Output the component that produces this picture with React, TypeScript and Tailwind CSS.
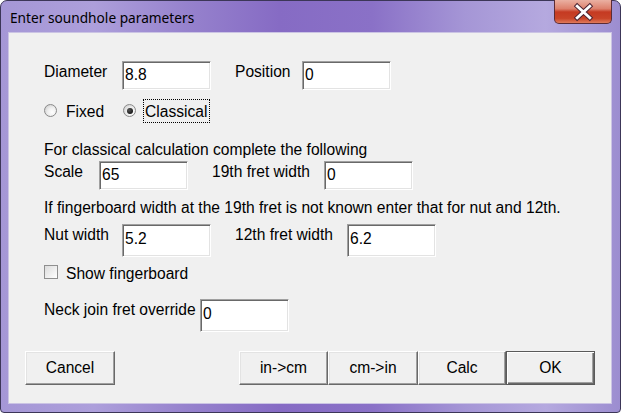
import React from 'react';

const Field = ({ value, tall }: { value: string; tall?: boolean }) => (
  <div
    className={`${tall ? 'h-[33px] pt-[5px]' : 'h-[29px] pt-[4px]'} w-[89px] shrink-0 bg-white pl-[2px] border border-t-[#a0a0a0] border-l-[#a0a0a0] border-b-white border-r-white shadow-[inset_1px_1px_0_#696969,inset_-1px_-1px_0_#e3e3e3]`}
  >
    {value}
  </div>
);

const Radio = ({ checked }: { checked?: boolean }) => (
  <div className="mt-[1px] w-[13px] h-[13px] shrink-0 rounded-full border border-[#8a8a8a] bg-[radial-gradient(circle_at_65%_65%,#ffffff_0%,#eeeeee_45%,#c4c4c4_100%)] flex items-center justify-center">
    {checked && <div className="w-[6px] h-[6px] rounded-full bg-[radial-gradient(circle_at_35%_35%,#555555,#000000)]" />}
  </div>
);

const Btn = ({ label, w, def }: { label: string; w: string; def?: boolean }) => (
  <div
    className={`${w} h-[34px] flex items-center justify-center bg-[#f0f0f0] ${
      def
        ? 'border border-[#5a5a5a] shadow-[inset_1px_1px_0_#ffffff,inset_-1px_-1px_0_#696969,inset_-2px_-2px_0_#a0a0a0]'
        : 'border border-t-white border-l-white border-r-[#696969] border-b-[#696969] shadow-[inset_-1px_-1px_0_#a0a0a0,inset_1px_1px_0_#e3e3e3]'
    }`}
  >
    {label}
  </div>
);

export default function App() {
  return (
    <div className="w-[621px] h-[413px] flex flex-col border border-[#3c3658] rounded-t-[7px] rounded-b-[4px] pl-[7px] pr-[8px] pb-[8px] bg-[linear-gradient(90deg,#a597d6_0%,#ad9fdb_15%,#9682cd_30%,#866bc4_45%,#8a71c7_60%,#a596d6_75%,#b5a9df_88%,#9c8dd0_100%)]">
      {/* title bar */}
      <div className="h-[31px] flex items-start shrink-0">
        <div className="pt-[7px] pl-[2px] text-[13.7px] leading-[20px] text-black font-['Noto_Sans',sans-serif]">
          Enter soundhole parameters
        </div>
        <div className="ml-auto w-[58px] h-[24px] -mt-[1px] rounded-b-[5px] border border-t-0 border-[#5b2b35] bg-[linear-gradient(180deg,#eab0a2_0%,#dd806c_38%,#c53a22_52%,#c94428_80%,#e07b5c_100%)] flex items-center justify-center">
          <svg width="58" height="24" viewBox="0 0 58 24">
            <path d="M23 6 L36 18 M36 6 L23 18" stroke="#4b2230" strokeWidth="5" strokeLinecap="square" fill="none" />
            <path d="M23 6 L36 18 M36 6 L23 18" stroke="#ffffff" strokeWidth="3" strokeLinecap="square" fill="none" />
          </svg>
        </div>
      </div>

      {/* client area */}
      <div className="flex-1 flex flex-col bg-[#f0f0f0] border border-[#cbc4e4] pt-[28px] text-[15.6px] leading-[18px] text-black font-['Liberation_Sans',Arial,sans-serif]">
        <div className="pl-[35px] flex flex-col">
          <div className="flex items-start">
            <div className="w-[78px] mt-[2px]">Diameter</div>
            <Field value="8.8" />
            <div className="w-[67px] ml-[24px] mt-[2px]">Position</div>
            <Field value="0" />
          </div>

          <div className="flex items-start mt-[13px] h-[18px]">
            <div className="w-[79px] flex items-start gap-[9px]">
              <Radio />
              <span>Fixed</span>
            </div>
            <div className="flex items-start gap-[9px]">
              <Radio checked />
              <span className="relative">
                Classical
                <span className="absolute -top-[4px] -bottom-[2px] -left-[2px] -right-[3px] border border-dotted border-black" />
              </span>
            </div>
          </div>

          <div className="mt-[20px]">For classical calculation complete the following</div>

          <div className="flex items-start mt-[2px]">
            <div className="w-[55px] mt-[2px]">Scale</div>
            <Field value="65" />
            <div className="w-[112px] ml-[24px] mt-[2px]">19th fret width</div>
            <Field value="0" />
          </div>

          <div className="mt-[9px] whitespace-nowrap">
            If fingerboard width at the 19th fret is not known enter that for nut and 12th.
          </div>

          <div className="flex items-start mt-[7px]">
            <div className="w-[78px] mt-[2px]">Nut width</div>
            <Field value="5.2" tall />
            <div className="w-[112px] ml-[24px] mt-[2px]">12th fret width</div>
            <Field value="6.2" tall />
          </div>

          <div className="flex items-start gap-[8px] mt-[8px] h-[18px]">
            <div className="w-[14px] h-[14px] border border-[#8f8f8f] bg-[linear-gradient(135deg,#dcdcdc,#ffffff)]" />
            <span>Show fingerboard</span>
          </div>

          <div className="flex items-start mt-[16px]">
            <div className="w-[156px] mt-[2px] whitespace-nowrap">Neck join fret override</div>
            <Field value="0" tall />
          </div>
        </div>

        <div className="flex justify-between px-[16px] mt-[19px]">
          <Btn label="Cancel" w="w-[90px]" />
          <div className="flex">
            <Btn label={'in->cm'} w="w-[89px]" />
            <Btn label={'cm->in'} w="w-[90px]" />
            <Btn label="Calc" w="w-[88px]" />
            <Btn label="OK" w="w-[89px]" def />
          </div>
        </div>
      </div>
    </div>
  );
}
